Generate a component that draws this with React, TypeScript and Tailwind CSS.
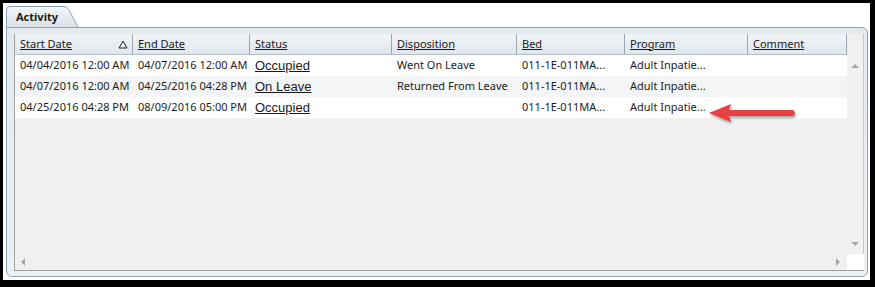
type Row = {
  start: string;
  end: string;
  status: string;
  disposition: string;
  bed: string;
  program: string;
  comment: string;
};

const columns = [
  { label: "Start Date", w: "w-[118px]", sort: true },
  { label: "End Date", w: "w-[117px]" },
  { label: "Status", w: "w-[142px]" },
  { label: "Disposition", w: "w-[125px]" },
  { label: "Bed", w: "w-[108px]" },
  { label: "Program", w: "w-[123px]" },
  { label: "Comment", w: "flex-1" },
];

const rows: Row[] = [
  {
    start: "04/04/2016 12:00 AM",
    end: "04/07/2016 12:00 AM",
    status: "Occupied",
    disposition: "Went On Leave",
    bed: "011-1E-011MA...",
    program: "Adult Inpatie...",
    comment: "",
  },
  {
    start: "04/07/2016 12:00 AM",
    end: "04/25/2016 04:28 PM",
    status: "On Leave",
    disposition: "Returned From Leave",
    bed: "011-1E-011MA...",
    program: "Adult Inpatie...",
    comment: "",
  },
  {
    start: "04/25/2016 04:28 PM",
    end: "08/09/2016 05:00 PM",
    status: "Occupied",
    disposition: "",
    bed: "011-1E-011MA...",
    program: "Adult Inpatie...",
    comment: "",
  },
];

const Tri = ({ dir }: { dir: "up" | "down" | "left" | "right" }) => {
  const pts = {
    up: "0,4 4,0 8,4",
    down: "0,0 8,0 4,4",
    left: "4,0 4,8 0,4",
    right: "0,0 0,8 4,4",
  }[dir];
  const vb = dir === "up" || dir === "down" ? "0 0 8 4" : "0 0 4 8";
  const size = dir === "up" || dir === "down" ? "w-[8px] h-[4px]" : "w-[4px] h-[8px]";
  return (
    <svg viewBox={vb} className={size}>
      <polygon points={pts} fill="#a7a7a7" />
    </svg>
  );
};

export default function App() {
  return (
    <div className="w-[875px] h-[287px] bg-black p-[3px] pr-[5px] pb-[7px] font-['Noto_Sans',sans-serif] text-[11px] text-[#1c1c1c]">
      <div className="relative h-full bg-white pt-[3px] pl-[3px] pr-[2px] pb-[3px] flex flex-col">
        {/* tab strip */}
        <div className="flex h-[21px] items-end">
          <div className="relative h-[21px] w-[74px]">
            <svg className="absolute inset-0" viewBox="0 0 74 21" width="74" height="21">
              <defs>
                <linearGradient id="tabg" x1="0" y1="0" x2="0" y2="1">
                  <stop offset="0" stopColor="#f4f6f8" />
                  <stop offset="1" stopColor="#d9e1e8" />
                </linearGradient>
              </defs>
              <path d="M0.5,21 L0.5,4 Q0.5,0.5 4,0.5 L58,0.5 Q61,0.5 63,4 L72,21" fill="url(#tabg)" stroke="#8ea2b3" />
            </svg>
            <span className="absolute left-[10px] top-[3px] font-bold text-[11px] text-[#1a1a1a]">Activity</span>
          </div>
        </div>

        {/* panel */}
        <div className="flex-1 flex flex-col rounded-b-[6px] rounded-tr-[6px] border border-[#8ea2b3] bg-gradient-to-b from-[#e4e9ee] to-[#eef0f2] pl-[7px] pr-[3px] pt-[6px] pb-[5px]">
          <div className="flex-1 flex flex-col border-l border-b border-[#a0a0a0] bg-[#f0f0f0]">
            <div className="flex flex-1">
              {/* grid body */}
              <div className="flex-1 flex flex-col">
                <div className="flex h-[21px] bg-gradient-to-b from-[#f2f5f8] to-[#dfe6ed] border-b border-[#b5bdc5]">
                  {columns.map((c) => (
                    <div
                      key={c.label}
                      className={`${c.w} flex items-center justify-between pl-[5px] pr-[4px] border-r border-[#9aa5b0]`}
                    >
                      <span className="underline text-[#1a1a1a]">{c.label}</span>
                      {c.sort && (
                        <svg viewBox="0 0 10 9" className="w-[10px] h-[9px]">
                          <path d="M5,1 L9,8 L1,8 Z" fill="none" stroke="#222" strokeWidth="1" />
                        </svg>
                      )}
                    </div>
                  ))}
                </div>
                {rows.map((r, i) => (
                  <div
                    key={i}
                    className={`flex h-[21px] items-center ${i % 2 === 1 ? "bg-[#f3f5f7]" : "bg-white"}`}
                  >
                    <div className="w-[118px] pl-[5px] whitespace-nowrap">{r.start}</div>
                    <div className="w-[117px] pl-[5px] whitespace-nowrap">{r.end}</div>
                    <div className="w-[142px] pl-[5px]">
                      <span className="underline text-[13px] font-['Liberation_Sans',sans-serif] text-[#1a1a1a]">
                        {r.status}
                      </span>
                    </div>
                    <div className="w-[125px] pl-[5px] whitespace-nowrap">{r.disposition}</div>
                    <div className="w-[108px] pl-[5px] whitespace-nowrap">{r.bed}</div>
                    <div className="w-[123px] pl-[5px] whitespace-nowrap">{r.program}</div>
                    <div className="flex-1 pl-[5px]">{r.comment}</div>
                  </div>
                ))}
                <div className="flex-1" />
              </div>

              {/* vertical scrollbar */}
              <div className="w-[17px] flex flex-col items-center justify-between pt-[30px] pb-[8px] bg-[#f0f0f0] border-r border-[#c8c8c8]">
                <Tri dir="up" />
                <Tri dir="down" />
              </div>
            </div>

            {/* horizontal scrollbar */}
            <div className="flex h-[16px]">
              <div className="flex-1 flex items-center justify-between pl-[6px] pr-[7px]">
                <Tri dir="left" />
                <Tri dir="right" />
              </div>
              <div className="w-[17px] bg-white" />
            </div>
          </div>
        </div>

        {/* callout arrow */}
        <svg className="absolute left-[698px] top-[96px] w-[100px] h-[30px]" viewBox="0 0 100 30">
          <defs>
            <filter id="sh" x="-10%" y="-30%" width="130%" height="180%">
              <feDropShadow dx="1" dy="2" stdDeviation="1.3" floodColor="#000" floodOpacity="0.35" />
            </filter>
          </defs>
          <g filter="url(#sh)">
            <path d="M8,14 L30,5 L28,11 L92,11 Q96,14 92,17 L28,17 L30,23 Z" fill="#e8413f" />
          </g>
        </svg>
      </div>
    </div>
  );
}
